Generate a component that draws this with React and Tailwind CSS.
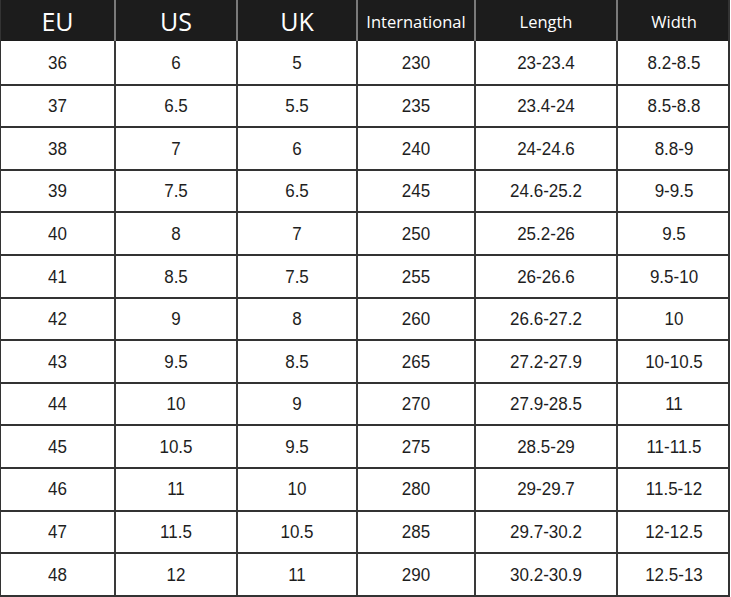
import React from "react";

const headers = [
  { label: "EU", size: "text-[25px]" },
  { label: "US", size: "text-[25px]" },
  { label: "UK", size: "text-[25px]" },
  { label: "International", size: "text-[16.5px]" },
  { label: "Length", size: "text-[16.5px]" },
  { label: "Width", size: "text-[16.5px]" },
];

const rows = [
  ["36", "6", "5", "230", "23-23.4", "8.2-8.5"],
  ["37", "6.5", "5.5", "235", "23.4-24", "8.5-8.8"],
  ["38", "7", "6", "240", "24-24.6", "8.8-9"],
  ["39", "7.5", "6.5", "245", "24.6-25.2", "9-9.5"],
  ["40", "8", "7", "250", "25.2-26", "9.5"],
  ["41", "8.5", "7.5", "255", "26-26.6", "9.5-10"],
  ["42", "9", "8", "260", "26.6-27.2", "10"],
  ["43", "9.5", "8.5", "265", "27.2-27.9", "10-10.5"],
  ["44", "10", "9", "270", "27.9-28.5", "11"],
  ["45", "10.5", "9.5", "275", "28.5-29", "11-11.5"],
  ["46", "11", "10", "280", "29-29.7", "11.5-12"],
  ["47", "11.5", "10.5", "285", "29.7-30.2", "12-12.5"],
  ["48", "12", "11", "290", "30.2-30.9", "12.5-13"],
];

const cols = "grid grid-cols-[115px_122px_120px_118px_142px_112px]";

export default function App() {
  return (
    <div className="w-[731px] h-[597px] bg-white">
      <div className="w-[730px] border-l-[1.5px] border-r-2 border-b-2 border-[#333]">
        <div className={`${cols} h-[41px] bg-[#1c1c1c]`}>
          {headers.map((h, i) => (
            <div
              key={h.label}
              className={`flex items-center justify-center pt-[3px] text-white ${h.size} ${
                i < 5 ? "border-r-2 border-[#7a7a7a]" : ""
              }`}
              style={{ fontFamily: '"Open Sans", "Noto Sans", sans-serif' }}
            >
              {h.label}
            </div>
          ))}
        </div>
        {rows.map((r, ri) => (
          <div
            key={r[0]}
            className={`${cols} h-[42.6px] ${ri > 0 ? "border-t-2 border-[#333]" : ""}`}
          >
            {r.map((c, ci) => (
              <div
                key={ci}
                className={`flex items-center justify-center text-[17px] text-[#1e1e1e] ${
                  ci < 5 ? "border-r-2 border-[#3a3a3a]" : ""
                }`}
                style={{ fontFamily: '"Liberation Sans", Arial, sans-serif' }}
              >
                <span className="inline-block scale-y-110">{c}</span>
              </div>
            ))}
          </div>
        ))}
      </div>
    </div>
  );
}
